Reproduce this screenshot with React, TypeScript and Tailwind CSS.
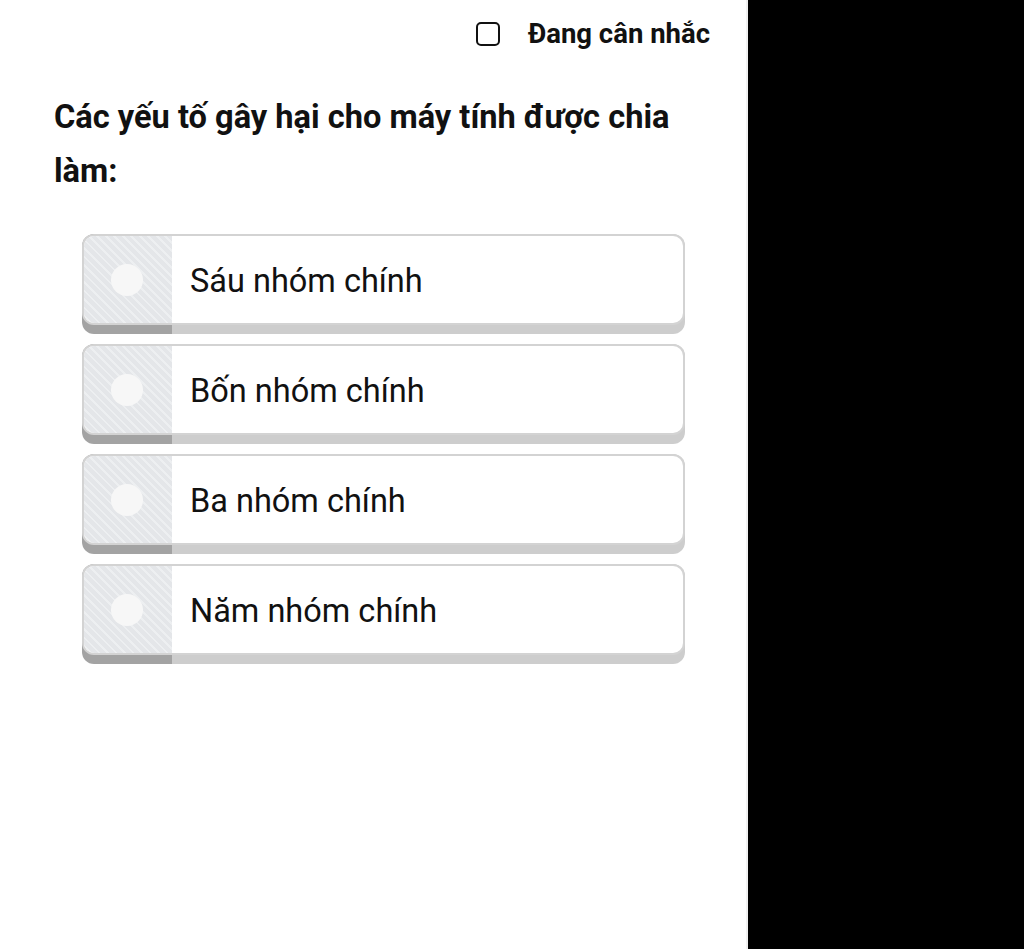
import React from "react";

const options = ["Sáu nhóm chính", "Bốn nhóm chính", "Ba nhóm chính", "Năm nhóm chính"];

function Option({ label }: { label: string }) {
  return (
    <div className="rounded-[12px] pb-[9px] bg-[linear-gradient(to_right,#a3a3a3_90px,#cdcdcd_90px)]">
      <div className="flex h-[91px] overflow-hidden rounded-[12px] border-2 border-[#d3d3d3] bg-white">
        <div className="flex w-[88px] shrink-0 items-center justify-center pr-[2px] bg-[repeating-linear-gradient(45deg,#e4e6e9_0px,#e4e6e9_4px,#edeff1_4px,#edeff1_6px)]">
          <div className="h-[32px] w-[32px] rounded-full bg-[#f7f7f7]" />
        </div>
        <div className="flex flex-1 items-center pl-[18px] pt-[3px] text-[32.5px] text-[#111] font-['Roboto',sans-serif]">
          {label}
        </div>
      </div>
    </div>
  );
}

export default function App() {
  return (
    <div className="flex h-[949px] w-[1024px] bg-black font-['Roboto',sans-serif]">
      <div className="h-full w-[748px] bg-white border-r-2 border-[#f0f0f0]">
        <div className="flex items-center justify-end gap-[28px] pr-[36px] pt-[22px]">
          <div className="h-[24px] w-[24px] rounded-[5px] border-2 border-[#111]" />
          <span className="text-[27.5px] font-bold text-[#111] leading-[24px]">Đang cân nhắc</span>
        </div>
        <h1 className="mt-[44px] w-[716px] pl-[54px] text-[32.6px] font-bold leading-[54px] text-[#111]">
          Các yếu tố gây hại cho máy tính được chia làm:
        </h1>
        <div className="ml-[82px] mt-[36px] flex w-[603px] flex-col gap-[10px]">
          {options.map((o) => (
            <Option key={o} label={o} />
          ))}
        </div>
      </div>
    </div>
  );
}
